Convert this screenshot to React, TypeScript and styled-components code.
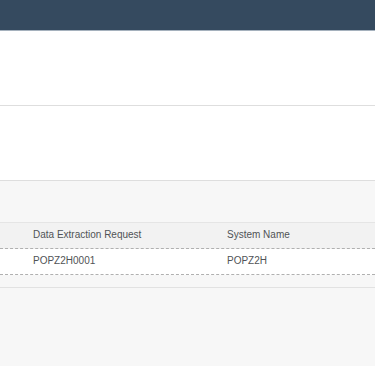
import React from "react";
import styled, { createGlobalStyle } from "styled-components";

const Global = createGlobalStyle`
  html, body { margin: 0; padding: 0; }
  body { background: #f7f7f7; font-family: "Liberation Sans", Arial, sans-serif; }
`;

const Page = styled.div`
  width: 375px;
  height: 366px;
  display: flex;
  flex-direction: column;
  background: #f7f7f7;
  overflow: hidden;
`;

const Shell = styled.header`
  height: 30px;
  background: #354a5f;
  border-bottom: 1px solid #a5b1bd;
  flex: none;
`;

const Section = styled.div<{ $h: number }>`
  height: ${(p) => p.$h}px;
  background: #ffffff;
  border-bottom: 1px solid #dedede;
  flex: none;
`;

const Content = styled.div`
  padding-top: 41px;
  display: flex;
  flex-direction: column;
`;

const Table = styled.div`
  display: flex;
  flex-direction: column;
  border-top: 1px solid #e5e5e5;
`;

const Row = styled.div<{ $header?: boolean }>`
  display: grid;
  grid-template-columns: 227px 1fr;
  height: 26px;
  padding-bottom: 2px;
  box-sizing: border-box;
  align-items: center;
  background: ${(p) => (p.$header ? "#f2f2f2" : "#ffffff")};
  border-bottom: 1px dashed #b0b0b0;
`;

const Cell = styled.div<{ $first?: boolean }>`
  padding-left: ${(p) => (p.$first ? "33px" : "0")};
  font-size: 10px;
  color: #505356;
  white-space: nowrap;
`;

const Footer = styled.div`
  margin-top: 12px;
  border-top: 1px solid #e2e2e2;
`;

export default function App() {
  return (
    <Page>
      <Global />
      <Shell />
      <Section $h={74} />
      <Section $h={74} />
      <Content>
        <Table>
          <Row $header>
            <Cell $first>Data Extraction Request</Cell>
            <Cell>System Name</Cell>
          </Row>
          <Row>
            <Cell $first>POPZ2H0001</Cell>
            <Cell>POPZ2H</Cell>
          </Row>
        </Table>
        <Footer />
      </Content>
    </Page>
  );
}
